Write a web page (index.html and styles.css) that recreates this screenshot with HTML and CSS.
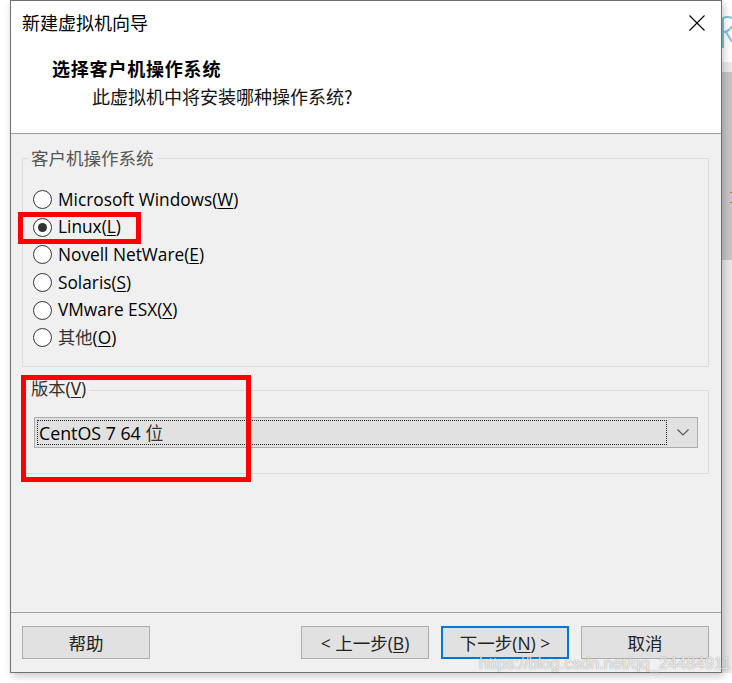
FILE: index.html
```html
<!DOCTYPE html>
<html lang="zh-CN">
<head>
<meta charset="utf-8">
<title>新建虚拟机向导</title>
<link rel="stylesheet" href="styles.css">
</head>
<body>
<div class="screen">
  <div class="window">
    <div class="header">
      <div class="titlebar">
        <span class="title">新建虚拟机向导</span>
        <svg class="close" width="16" height="16" viewBox="0 0 16 16"><path d="M0.5 0.5 L15.5 15.5 M15.5 0.5 L0.5 15.5" stroke="#000" stroke-width="1.1" fill="none"/></svg>
      </div>
      <div class="heading">选择客户机操作系统</div>
      <div class="subtitle">此虚拟机中将安装哪种操作系统?</div>
    </div>
    <div class="body">
      <div class="group group-os">
        <span class="group-label">客户机操作系统</span>
        <div class="radio-row"><span class="radio"></span><span class="radio-text">Microsoft Windows(<span class="u">W</span>)</span></div>
        <div class="radio-row"><span class="radio checked"></span><span class="radio-text">Linux(<span class="u">L</span>)</span></div>
        <div class="radio-row"><span class="radio"></span><span class="radio-text">Novell NetWare(<span class="u">E</span>)</span></div>
        <div class="radio-row"><span class="radio"></span><span class="radio-text">Solaris(<span class="u">S</span>)</span></div>
        <div class="radio-row"><span class="radio"></span><span class="radio-text">VMware ESX(<span class="u">X</span>)</span></div>
        <div class="radio-row"><span class="radio"></span><span class="radio-text"><span class="cjk">其他</span>(<span class="u">O</span>)</span></div>
      </div>
      <div class="group group-ver">
        <span class="group-label"><span class="cjk">版本</span>(<span class="u">V</span>)</span>
        <div class="select">
          <div class="select-value">CentOS 7 64 <span class="cjk">位</span></div>
          <svg class="chevron" width="12" height="7" viewBox="0 0 12 7"><polyline points="0.5,0.5 6,6 11.5,0.5" stroke="#555" stroke-width="1.1" fill="none"/></svg>
        </div>
      </div>
    </div>
    <div class="footer">
      <div class="btn">帮助</div>
      <div class="spacer"></div>
      <div class="btn">&lt; 上一步(<span class="u">B</span>)</div>
      <div class="btn primary">下一步(<span class="u">N</span>) &gt;</div>
      <div class="btn">取消</div>
    </div>
  </div>
  <div class="side">
    <div class="side-top"><svg width="10" height="40" viewBox="0 0 10 40"><path d="M1 10 Q6 8 10 10 M1 10 L1 40 M1 24 Q7 24 10 18 M4 24 L10 34" stroke="#7cc6d6" stroke-width="2" fill="none"/></svg></div>
    <div class="side-light"></div>
    <div class="side-dark"><span class="mark m1"></span><span class="mark m2"></span></div>
    <div class="side-rest"></div>
  </div>
  <div class="mark-box box-linux"></div>
  <div class="mark-box box-version"></div>
  <div class="watermark">https://blog.csdn.net/qq_24484911</div>
</div>
</body>
</html>
```

FILE: styles.css
```css
html, body {
  margin: 0;
  padding: 0;
  background: #ffffff;
}
.screen {
  position: relative;
  width: 732px;
  height: 683px;
  display: flex;
  align-items: flex-start;
  overflow: hidden;
  font-family: "Open Sans", "Noto Sans CJK SC", sans-serif;
  font-size: 17.3px;
  color: #000;
}
.window {
  margin-left: 10px;
  width: 712px;
  height: 673px;
  box-sizing: border-box;
  border: 1px solid #6f6f6f;
  display: flex;
  flex-direction: column;
  background: #f0f0f0;
  box-shadow: 2px 3px 8px rgba(0,0,0,0.22);
  position: relative;
  z-index: 1;
}
.header {
  height: 133px;
  box-sizing: border-box;
  background: #fff;
  border-bottom: 1px solid #a0a0a0;
  padding-top: 9px;
}
.titlebar {
  display: flex;
  align-items: center;
  justify-content: space-between;
  padding-left: 11px;
  padding-right: 16px;
  height: 24px;
}
.title {
  font-family: "Noto Sans CJK SC", sans-serif;
  font-size: 18px;
  line-height: 24px;
}
.close {
  display: block;
  margin-top: 2px;
}
.heading {
  margin-top: 22px;
  padding-left: 41px;
  font-family: "Noto Sans CJK SC", sans-serif;
  font-weight: bold;
  font-size: 18px;
  line-height: 24px;
  letter-spacing: 0.8px;
}
.subtitle {
  margin-top: 4px;
  padding-left: 81px;
  font-family: "Noto Sans CJK SC", sans-serif;
  font-size: 18px;
  line-height: 24px;
  color: #111;
}
.body {
  height: 479px;
  box-sizing: border-box;
  padding: 24px 12px 0 11px;
  border-bottom: 1px solid #a0a0a0;
  display: flex;
  flex-direction: column;
}
.group {
  position: relative;
  border: 1px solid #dcdcdc;
  box-sizing: border-box;
}
.group-label {
  position: absolute;
  left: 5px;
  top: -13px;
  padding: 0 3px;
  background: #f0f0f0;
  line-height: 24px;
  font-size: 17.3px;
  color: #222;
}
.group-os .group-label {
  font-family: "Noto Sans CJK SC", sans-serif;
  font-size: 17.5px;
  color: #555;
}
.group-os {
  height: 209px;
  padding: 27px 0 0 10px;
}
.radio-row {
  display: flex;
  align-items: center;
  height: 27.6px;
}
.radio {
  width: 19px;
  height: 19px;
  box-sizing: border-box;
  border: 1px solid #333;
  border-radius: 50%;
  background: #fff;
  display: flex;
  align-items: center;
  justify-content: center;
  margin-right: 6px;
  flex: none;
}
.radio.checked::after {
  content: "";
  width: 9px;
  height: 9px;
  border-radius: 50%;
  background: #333;
}
.radio-text {
  line-height: 24px;
  white-space: nowrap;
}
.cjk {
  font-family: "Noto Sans CJK SC", sans-serif;
  color: #333;
}
.u {
  text-decoration: underline;
  text-underline-offset: 2px;
  text-decoration-thickness: 1px;
}
.group-ver {
  margin-top: 23px;
  height: 84px;
  padding: 26px 10px 0 11px;
}
.group-ver .group-label {
  top: -15px;
}
.select {
  height: 31px;
  box-sizing: border-box;
  border: 1px solid #adadad;
  background: #e1e1e1;
  display: flex;
  align-items: center;
  padding: 2px 0 2px 2px;
}
.select-value {
  flex: 1;
  height: 25px;
  box-sizing: border-box;
  border: 1px dotted #222;
  line-height: 23px;
  padding-left: 1px;
  white-space: nowrap;
  font-size: 17.8px;
}
.chevron {
  display: block;
  margin: 0 8px 0 10px;
  flex: none;
}
.footer {
  flex: 1;
  display: flex;
  align-items: flex-start;
  padding: 13px 12px 0 11px;
  gap: 12px;
}
.spacer {
  flex: 1;
}
.btn {
  width: 128px;
  height: 33px;
  box-sizing: border-box;
  border: 1px solid #adadad;
  background: #e1e1e1;
  display: flex;
  align-items: center;
  justify-content: center;
  font-family: "Open Sans", "Noto Sans CJK SC", sans-serif;
  font-size: 17.5px;
  color: #222;
  white-space: nowrap;
}
.btn.primary {
  border: 2px solid #0078d7;
}
.side {
  width: 10px;
  display: flex;
  flex-direction: column;
}
.side-top {
  height: 62px;
  background: #fff;
  padding-top: 8px;
  box-sizing: border-box;
}
.side-top svg {
  display: block;
}
.side-light {
  height: 10px;
  background: #ebebeb;
}
.side-dark {
  position: relative;
  height: 188px;
  background: #c6c6c6;
}
.mark {
  position: absolute;
  left: 8px;
  width: 2px;
  height: 1px;
  background: #b07a20;
}
.m1 { top: 120px; }
.m2 { top: 130px; }
.side-rest {
  height: 413px;
  background: #e9e9e9;
}
.mark-box {
  position: absolute;
  border: 5px solid #ff0000;
  box-sizing: border-box;
  z-index: 2;
}
.box-linux {
  left: 18px;
  top: 212px;
  width: 123px;
  height: 32px;
}
.box-version {
  left: 21px;
  top: 375px;
  width: 230px;
  height: 107px;
}
.watermark {
  position: absolute;
  left: 479px;
  top: 653px;
  z-index: 3;
  font-family: "Liberation Sans", Arial, sans-serif;
  font-size: 16.5px;
  line-height: 20px;
  color: rgba(255,255,255,0.8);
  text-shadow: 0 0 1px rgba(0,0,0,0.35), 0 0 2px rgba(0,0,0,0.15);
  white-space: nowrap;
}
```
